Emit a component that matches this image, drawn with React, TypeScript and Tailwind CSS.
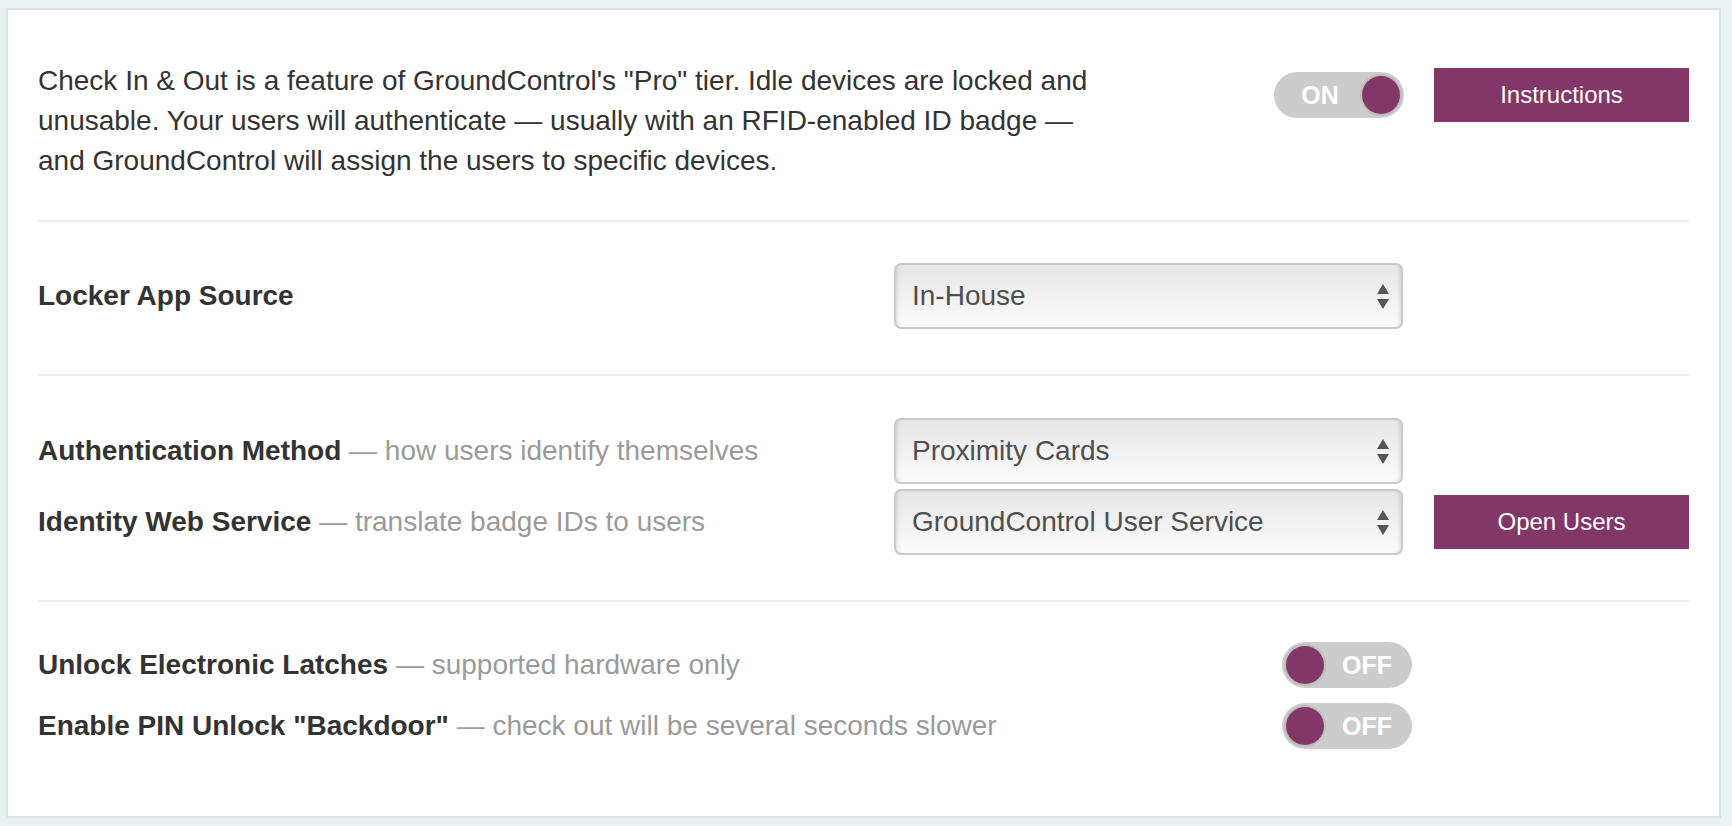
import React from "react";

const PURPLE = "bg-[#833769]";

function Toggle({ on }: { on: boolean }) {
  return (
    <div className="flex h-[46px] w-[130px] items-center rounded-full bg-[#cccccc] px-[4px]">
      {on ? (
        <>
          <span className="flex-1 text-center text-[25px] font-bold leading-none text-white">ON</span>
          <span className={`h-[38px] w-[38px] rounded-full ${PURPLE} shadow-[0_0_0_2px_#bdbdbd]`} />
        </>
      ) : (
        <>
          <span className={`h-[38px] w-[38px] rounded-full ${PURPLE} shadow-[0_0_0_2px_#bdbdbd]`} />
          <span className="flex-1 pl-[2px] text-center text-[25px] font-bold leading-none text-white">OFF</span>
        </>
      )}
    </div>
  );
}

function Select({ value }: { value: string }) {
  return (
    <div className="flex h-[66px] w-[509px] items-center justify-between rounded-[7px] border-2 border-[#c9c9c9] bg-[linear-gradient(to_bottom,#e6e6e6,#fbfbfb)] pl-[16px] pr-[12px] shadow-[inset_4px_0_4px_-3px_rgba(0,0,0,0.13),inset_-4px_0_4px_-3px_rgba(0,0,0,0.13)]">
      <span className="text-[28px] leading-[40px] text-[#4f4f4f]">{value}</span>
      <svg width="12" height="25" viewBox="0 0 12 25" className="shrink-0">
        <polygon points="6,0 12,10 0,10" fill="#555555" />
        <polygon points="0,15 12,15 6,25" fill="#555555" />
      </svg>
    </div>
  );
}

function Button({ label }: { label: string }) {
  return (
    <div className={`flex h-[54px] w-[255px] shrink-0 items-center justify-center ${PURPLE} text-[24px] leading-none text-white`}>
      {label}
    </div>
  );
}

function Label({ title, desc }: { title: string; desc?: string }) {
  return (
    <div className="flex-1 text-[28px] leading-[40px] whitespace-nowrap">
      <span className="font-bold text-[#333333]">{title}</span>
      {desc && <span className="text-[#9a9a9a]"> — {desc}</span>}
    </div>
  );
}

function Divider() {
  return <div className="h-[2px] w-full bg-[#ebebeb]" />;
}

export default function App() {
  return (
    <div className="h-[826px] w-[1732px] overflow-hidden bg-[#e9f2f2] pl-[6px] pt-[8px] font-['Liberation_Sans',Arial,sans-serif]">
      <div className="h-[810px] w-[1715px] border-2 border-[#d5e4e4] bg-white px-[30px]">
        {/* Section 1 */}
        <div className="flex items-start pb-[39px] pt-[51px]">
          <p className="w-[1070px] text-[28px] leading-[40px] text-[#333333]">
            Check In &amp; Out is a feature of GroundControl's "Pro" tier. Idle devices are locked and unusable. Your users will authenticate — usually with an RFID-enabled ID badge — and GroundControl will assign the users to specific devices.
          </p>
          <div className="ml-auto mt-[11px]">
            <Toggle on />
          </div>
          <div className="ml-[30px] mt-[7px]">
            <Button label="Instructions" />
          </div>
        </div>
        <Divider />

        {/* Section 2 */}
        <div className="pb-[45px] pt-[41px]">
          <div className="flex items-center">
            <Label title="Locker App Source" />
            <Select value="In-House" />
            <div className="w-[286px] shrink-0" />
          </div>
        </div>
        <Divider />

        {/* Section 3 */}
        <div className="flex flex-col gap-[5px] pb-[45px] pt-[42px]">
          <div className="flex items-center">
            <Label title="Authentication Method" desc="how users identify themselves" />
            <Select value="Proximity Cards" />
            <div className="w-[286px] shrink-0" />
          </div>
          <div className="flex items-center">
            <Label title="Identity Web Service" desc="translate badge IDs to users" />
            <Select value="GroundControl User Service" />
            <div className="ml-[31px]">
              <Button label="Open Users" />
            </div>
          </div>
        </div>
        <Divider />

        {/* Section 4 */}
        <div className="flex flex-col gap-[15px] pt-[40px]">
          <div className="flex items-center">
            <Label title="Unlock Electronic Latches" desc="supported hardware only" />
            <Toggle on={false} />
            <div className="w-[277px] shrink-0" />
          </div>
          <div className="flex items-center">
            <Label title={'Enable PIN Unlock "Backdoor"'} desc="check out will be several seconds slower" />
            <Toggle on={false} />
            <div className="w-[277px] shrink-0" />
          </div>
        </div>
      </div>
    </div>
  );
}
